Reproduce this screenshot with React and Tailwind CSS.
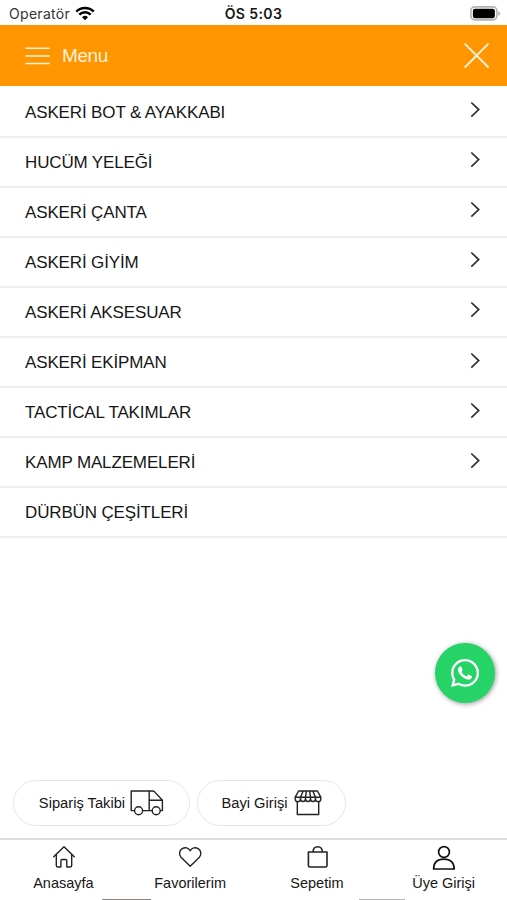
import React from "react";

const categories = [
  { label: "ASKERİ BOT & AYAKKABI", more: true },
  { label: "HUCÜM YELEĞİ", more: true },
  { label: "ASKERİ ÇANTA", more: true },
  { label: "ASKERİ GİYİM", more: true },
  { label: "ASKERİ AKSESUAR", more: true },
  { label: "ASKERİ EKİPMAN", more: true },
  { label: "TACTİCAL TAKIMLAR", more: true },
  { label: "KAMP MALZEMELERİ", more: true },
  { label: "DÜRBÜN ÇEŞİTLERİ", more: false },
];

function WifiIcon() {
  return (
    <svg width="20" height="15" viewBox="0 0 20 15" fill="none" stroke="#000" strokeWidth="2.4">
      <path d="M1.3 5.6 A12.3 12.3 0 0 1 18.7 5.6" />
      <path d="M4.3 8.7 A8 8 0 0 1 15.7 8.7" />
      <path d="M7 11.2 A4.3 4.3 0 0 1 13 11.2 L10 14.3 Z" fill="#000" stroke="none" />
    </svg>
  );
}

function BatteryIcon() {
  return (
    <svg width="31" height="15" viewBox="0 0 31 15">
      <rect x="0.9" y="0.9" width="26" height="13" rx="3.8" fill="#fff" stroke="#b2b2b2" strokeWidth="1.6" />
      <rect x="2.9" y="2.8" width="22" height="9.4" rx="2.2" fill="#000" />
      <path d="M28.3 5 Q30.2 5.6 30.2 7.4 Q30.2 9.2 28.3 9.8 Z" fill="#b2b2b2" />
    </svg>
  );
}

function TruckIcon() {
  return (
    <svg width="34" height="26" viewBox="0 0 34 26" fill="none" stroke="#222" strokeWidth="1.4" strokeLinejoin="round">
      <path d="M4.5 20.6 H1.2 V1 H19.2 V20.6 M12.3 20.6 H22 M30 20.6 H32.4 V10.3 L24.4 1.6 Q23.8 1 22.8 1 H19.2 M19.2 10.3 H32.2" />
      <circle cx="8.6" cy="20.8" r="4" fill="#fff" />
      <circle cx="26.2" cy="20.8" r="4" fill="#fff" />
    </svg>
  );
}

function StoreIcon() {
  return (
    <svg width="28" height="26" viewBox="0 0 28 26" fill="none" stroke="#222" strokeWidth="1.4" strokeLinejoin="round">
      <path d="M4.6 1 H23.4 L26.8 7.2 H1.2 Z M9.2 1 L6.5 7.2 V9.5 M12.4 1 L11.5 7.2 V9.5 M15.6 1 L16.5 7.2 V9.5 M18.8 1 L21.5 7.2 V9.5" />
      <path d="M1.2 7.2 V9 A2.6 2.6 0 0 0 6.5 9 A2.5 2.5 0 0 0 11.5 9 A2.5 2.5 0 0 0 16.5 9 A2.5 2.5 0 0 0 21.5 9 A2.6 2.6 0 0 0 26.8 9 V7.2" />
      <path d="M3.3 11.8 V24.5 H24.7 V11.8" />
    </svg>
  );
}

function HomeIcon() {
  return (
    <svg width="24" height="26" viewBox="0 0 24 26" fill="none" stroke="#222" strokeWidth="1.4" strokeLinejoin="round" strokeLinecap="round">
      <path d="M2.7 11.8 L13 1.7 L23.3 11.8" />
      <path d="M5.3 9.8 V20.6 Q5.3 22 6.7 22 H9.9 V15.6 Q9.9 14.5 11 14.5 H14.7 Q15.8 14.5 15.8 15.6 V22 H19.3 Q20.7 22 20.7 20.6 V9.8" />
    </svg>
  );
}

function HeartIcon() {
  return (
    <svg width="24" height="26" viewBox="0 0 24 26" fill="none" stroke="#222" strokeWidth="1.4" strokeLinejoin="round">
      <path d="M12.2 21.3 L3 12.2 C0.7 9.3 1.3 5.3 4.2 3.6 C7.2 2 10.7 2.6 12.2 5.8 C13.7 2.6 17.2 2 20.2 3.6 C23.1 5.3 23.7 9.3 21.4 12.2 Z" />
    </svg>
  );
}

function BagIcon() {
  return (
    <svg width="24" height="26" viewBox="0 0 24 26" fill="none" stroke="#222" strokeWidth="1.6" strokeLinejoin="round">
      <path d="M3.4 7 H22 V20.4 Q22 22 20.4 22 H5 Q3.4 22 3.4 20.4 Z" />
      <path d="M8 7 C8.3 0 17.1 0 17.4 7" />
    </svg>
  );
}

function UserIcon() {
  return (
    <svg width="24" height="26" viewBox="0 0 24 26" fill="none" stroke="#111" strokeWidth="1.7" strokeLinejoin="round">
      <circle cx="12" cy="7" r="5.4" />
      <path d="M1.6 24 C1.6 17.6 5.5 14.1 11.9 14.1 C18.3 14.1 22.2 17.6 22.2 24 Z" />
    </svg>
  );
}

function WhatsAppIcon() {
  return (
    <svg width="32" height="32" viewBox="0 0 448 512" fill="#fff">
      <path d="M380.9 97.1C339 55.1 283.2 32 223.9 32c-122.4 0-222 99.6-222 222 0 39.1 10.2 77.3 29.6 111L0 480l117.7-30.9c32.4 17.7 68.9 27 106.1 27h.1c122.3 0 224.1-99.6 224.1-222 0-59.3-25.2-115-67.1-157zm-157 341.6c-33.2 0-65.7-8.9-94-25.7l-6.7-4-69.8 18.3L72 359.2l-4.4-7c-18.5-29.4-28.2-63.3-28.2-98.2 0-101.7 82.8-184.5 184.6-184.5 49.3 0 95.6 19.2 130.4 54.1 34.8 34.9 56.2 81.2 56.1 130.5 0 101.8-84.9 184.6-186.6 184.6zm101.2-138.2c-5.5-2.8-32.8-16.2-37.9-18-5.1-1.9-8.8-2.8-12.5 2.8-3.7 5.6-14.3 18-17.6 21.8-3.2 3.7-6.5 4.2-12 1.4-32.6-16.3-54-29.1-75.5-66-5.7-9.8 5.7-9.1 16.3-30.3 1.8-3.7.9-6.9-.5-9.7-1.4-2.8-12.5-30.1-17.1-41.2-4.5-10.8-9.1-9.3-12.5-9.5-3.2-.2-6.9-.2-10.6-.2-3.7 0-9.7 1.4-14.8 6.9-5.1 5.6-19.4 19-19.4 46.3 0 27.3 19.9 53.7 22.6 57.4 2.8 3.7 39.1 59.7 94.8 83.8 35.2 15.2 49 16.5 66.6 13.9 10.7-1.6 32.8-13.4 37.4-26.4 4.6-13 4.6-24.1 3.2-26.4-1.3-2.5-5-3.9-10.5-6.6z" />
    </svg>
  );
}

const tabs = [
  { label: "Anasayfa", Icon: HomeIcon },
  { label: "Favorilerim", Icon: HeartIcon },
  { label: "Sepetim", Icon: BagIcon },
  { label: "Üye Girişi", Icon: UserIcon },
];

export default function App() {
  return (
    <div className="relative flex h-[900px] w-[507px] flex-col overflow-hidden bg-white font-['Liberation_Sans',Arial,sans-serif] text-[#161616]">
      <div className="grid h-[25px] shrink-0 grid-cols-3 items-center pt-[3px] font-[Inter,sans-serif] text-sm leading-none">
        <div className="flex items-center gap-[5px] pl-[9px] text-[#333]">
          <span className="tracking-[0.3px]">Operatör</span>
          <div className="pb-0.5"><WifiIcon /></div>
        </div>
        <div className="text-center text-sm leading-none font-semibold tracking-[0.4px]">ÖS 5:03</div>
        <div className="flex justify-end pr-[6px] pb-0.5"><BatteryIcon /></div>
      </div>

      <header className="flex h-[61px] shrink-0 items-center justify-between bg-[#ff9500] pr-[17px] pl-[25px] text-[#fff3d6]">
        <div className="flex items-center gap-[12px]">
          <svg width="25" height="18" viewBox="0 0 25 18" stroke="currentColor" strokeWidth="1.5">
            <path d="M0.5 1.3 H24.8 M0.5 9 H24.8 M0.5 16.6 H24.8" />
          </svg>
          <span className="text-[19px] leading-none tracking-[-0.4px]">Menu</span>
        </div>
        <svg width="27" height="27" viewBox="0 0 27 27" stroke="currentColor" strokeWidth="1.9" strokeLinecap="round">
          <path d="M2.2 2.2 L25 25 M25 2.2 L2.2 25" />
        </svg>
      </header>

      <nav className="flex shrink-0 flex-col pt-[1.5px]">
        {categories.map((c) => (
          <div key={c.label} className="flex h-[50.1px] items-center justify-between border-b-2 border-[#efefef] pt-px pr-[26px] pl-[25px]">
            <span className="text-[17px] leading-none tracking-[-0.14px]">{c.label}</span>
            {c.more && (
              <svg className="mb-[5px]" width="11" height="17" viewBox="0 0 11 17" fill="none" stroke="#303030" strokeWidth="1.7">
                <path d="M1.3 1.5 L8.7 8.6 L1.3 15.7" />
              </svg>
            )}
          </div>
        ))}
      </nav>

      <div className="mt-auto flex shrink-0 gap-[7px] pb-3 pl-[13px]">
        <div className="flex h-[46px] w-[177px] items-center justify-center gap-[5px] rounded-full border border-[#e6e6e6]">
          <span className="text-[14.7px] leading-none">Sipariş Takibi</span>
          <TruckIcon />
        </div>
        <div className="flex h-[46px] w-[149px] items-center justify-center gap-[6px] rounded-full border border-[#e6e6e6]">
          <span className="text-[14.7px] leading-none">Bayi Girişi</span>
          <StoreIcon />
        </div>
      </div>

      <footer className="flex h-[62px] shrink-0 flex-col border-t-2 border-[#dedede]">
        <div className="grid flex-1 grid-cols-4 pt-[5px]">
          {tabs.map(({ label, Icon }) => (
            <div key={label} className="flex flex-col items-center gap-[5px]">
              <Icon />
              <span className="text-[14.5px] leading-none">{label}</span>
            </div>
          ))}
        </div>
        <div className="flex h-px pl-[102px]">
          <div className="w-[49px] bg-[#8a8580]" />
          <div className="ml-[208px] w-[46px] bg-[#b5b5b5]" />
        </div>
      </footer>

      <div className="absolute top-[643px] left-[435px] flex size-[60px] items-center justify-center rounded-full bg-[#25d366] shadow-[1px_1px_5px_#999]">
        <WhatsAppIcon />
      </div>
    </div>
  );
}
